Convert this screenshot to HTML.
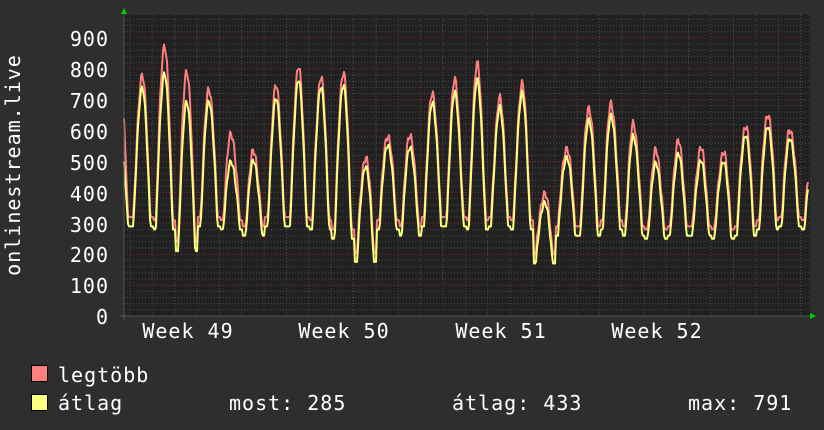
<!DOCTYPE html>
<html><head><meta charset="utf-8"><style>
html,body{margin:0;padding:0;background:#2e2e2e;width:824px;height:430px;overflow:hidden}
svg{display:block}
text{font-family:"DejaVu Sans Mono","Liberation Mono",monospace;fill:#fff;font-size:20px;letter-spacing:1px}
</style></head><body>
<svg id="s" width="824" height="430" xmlns="http://www.w3.org/2000/svg">
<rect x="0" y="0" width="824" height="430" fill="#2e2e2e"/>
<rect x="124" y="15" width="686" height="301" fill="#212121"/>
<g id="grid"></g>
<path id="red" fill="none" stroke="#ff7f7f" stroke-width="2" stroke-linejoin="round"/>
<path id="yel" fill="none" stroke="#ffff7f" stroke-width="2" stroke-linejoin="round"/>
<line x1="120" y1="316" x2="812" y2="316" stroke="#555" stroke-width="1"/>
<line x1="124" y1="12" x2="124" y2="320" stroke="#555" stroke-width="1"/>
<polygon points="121,14 127,14 124,8" fill="#0c0"/>
<polygon points="810,313 810,319 816,316" fill="#0c0"/>
<g text-anchor="end">
<text x="109" y="46">900</text><text x="109" y="77">800</text><text x="109" y="108">700</text>
<text x="109" y="139">600</text><text x="109" y="170">500</text><text x="109" y="201">400</text>
<text x="109" y="232">300</text><text x="109" y="262">200</text><text x="109" y="293">100</text>
<text x="109" y="324">0</text>
</g>
<text transform="translate(20,165) rotate(-90)" text-anchor="middle">onlinestream.live</text>
<g text-anchor="middle">
<text x="188" y="338">Week 49</text><text x="344" y="338">Week 50</text>
<text x="501" y="338">Week 51</text><text x="657" y="338">Week 52</text>
</g>
<rect x="31.5" y="365.5" width="16" height="16" fill="#ff7f7f" stroke="#000"/>
<rect x="31.5" y="394.5" width="16" height="16" fill="#ffff7f" stroke="#000"/>
<text x="58" y="382">legtöbb</text>
<text x="58" y="410">átlag</text>
<text x="229" y="410">most: 285</text>
<text x="452" y="410">átlag: 433</text>
<text x="688" y="410">max: 791</text>
</svg>
<script>
var g=document.getElementById('grid'),h='';
function Y(v){return 316-v*0.309;}
for(var v=20;v<=960;v+=20){var y=Y(v);if(y<15)break;var maj=v%100==0;
h+='<line x1="124" x2="810" y1="'+y.toFixed(1)+'" y2="'+y.toFixed(1)+'" stroke="'+(maj?'#7a3030':'#4a4a4a')+'" stroke-dasharray="1,2"/>';}
for(var x=130;x<810;x+=22.35){var red=Math.abs(((x-264)%156.5+156.5)%156.5)<2||Math.abs(((x-264)%156.5+156.5)%156.5-156.5)<2;
h+='<line y1="15" y2="316" x1="'+x.toFixed(1)+'" x2="'+x.toFixed(1)+'" stroke="'+(red?'#7a3030':'#4a4a4a')+'" stroke-dasharray="1,2"/>';}
g.innerHTML=h;
var P=[780,880,800,740,590,530,740,800,770,790,520,590,590,720,760,810,700,750,400,550,680,690,620,530,560,540,530,620,660,610,500];
var T=[290,280,210,290,280,260,290,290,280,250,175,280,260,290,290,280,290,280,170,260,260,280,260,250,260,260,250,260,280,290,280];
var YP=[740,790,700,700,500,500,700,760,740,750,490,560,550,690,720,760,670,720,370,520,640,650,580,490,520,500,500,590,620,580,480];
var dr='',dy='';
for(var x=124;x<=808;x+=1){
 var k=Math.round((x-142)/22.35),c=142+k*22.35,d=(x-c)/22.35; if(k<0)k=0;if(k>30)k=30;
 var p=P[k],t=T[k],yp=YP[k];
 var s=Math.abs(d)<0.38?Math.pow(Math.cos(Math.PI*d/0.76),1.1):0;
 var n=Math.sin(x*1.7)*12+Math.sin(x*0.53)*10;
 var vr=t+30+(p-t-30)*s+(s>0.05?n:0), vy=t+(yp-t)*s+(s>0.05?n*0.7:0);
 if(x<128){vr=640-(x-124)*80;vy=500-(x-124)*50;}
 dr+=(x==124?'M':'L')+x+','+Y(vr).toFixed(1);
 dy+=(x==124?'M':'L')+x+','+Y(vy).toFixed(1);
}
document.getElementById('red').setAttribute('d',dr);
document.getElementById('yel').setAttribute('d',dy);
</script>
</body></html>
